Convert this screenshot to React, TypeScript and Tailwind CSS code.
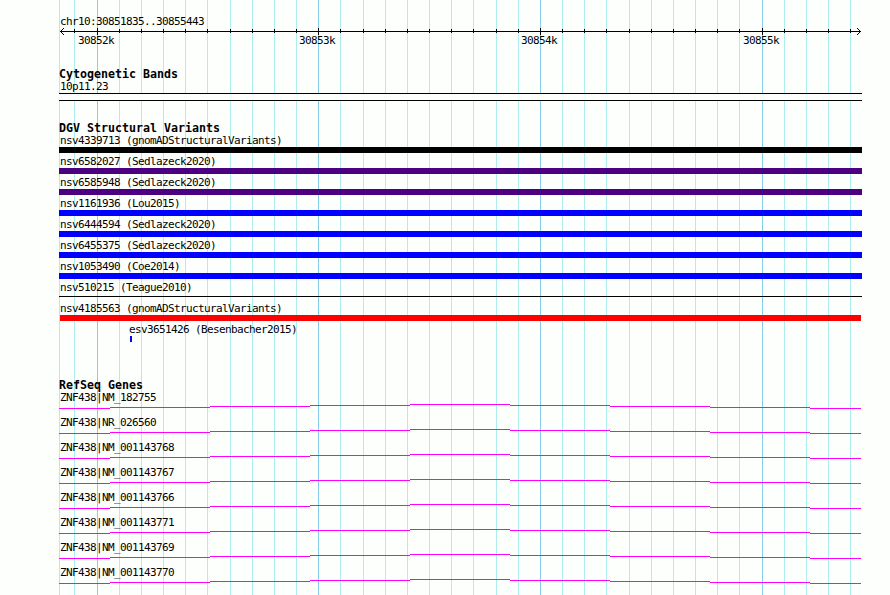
import React from "react";

const MINOR = [
  59, 74, 119, 141, 163, 185, 207, 230, 252, 274, 296, 340, 363, 385, 407, 429, 451, 473, 496, 518, 562, 584, 606,
  629, 651, 673, 695, 717, 739, 784, 806, 828, 850,
];

const MAJOR = [
  { x: 97, label: "30852k" },
  { x: 318, label: "30853k" },
  { x: 540, label: "30854k" },
  { x: 762, label: "30855k" },
];

const VARIANTS = [
  { name: "nsv4339713 (gnomADStructuralVariants)", bar: "h-1.5 bg-black" },
  { name: "nsv6582027 (Sedlazeck2020)", bar: "h-1.5 bg-[#4b0082]" },
  { name: "nsv6585948 (Sedlazeck2020)", bar: "h-1.5 bg-[#4b0082]" },
  { name: "nsv1161936 (Lou2015)", bar: "h-1.5 bg-[#0000ff]" },
  { name: "nsv6444594 (Sedlazeck2020)", bar: "h-1.5 bg-[#0000ff]" },
  { name: "nsv6455375 (Sedlazeck2020)", bar: "h-1.5 bg-[#0000ff]" },
  { name: "nsv1053490 (Coe2014)", bar: "h-1.5 bg-[#0000ff]" },
  { name: "nsv510215 (Teague2010)", bar: "mt-0.5 mb-[3px] h-px bg-black" },
  { name: "nsv4185563 (gnomADStructuralVariants)", bar: "ml-px mr-px h-1.5 bg-[#ff0000]" },
];

const GENES = [
  "ZNF438|NM_182755",
  "ZNF438|NR_026560",
  "ZNF438|NM_001143768",
  "ZNF438|NM_001143767",
  "ZNF438|NM_001143766",
  "ZNF438|NM_001143771",
  "ZNF438|NM_001143769",
  "ZNF438|NM_001143770",
];

const INTRON = "M0 4.5H51M51 3.5H151M151 2.5H251M251 1.5H351M351 .5H451M451 1.5H551M551 2.5H651M651 3.5H751M751 4.5H802";

function Grid() {
  return (
    <svg className="absolute inset-0" width="890" height="595" shapeRendering="crispEdges">
      {MINOR.map((x) => (
        <rect key={x} x={x} y="0" width="1" height="595" fill="#afeeee" />
      ))}
      {MAJOR.map(({ x }) => (
        <rect key={x} x={x} y="0" width="1" height="595" fill="#87ceeb" />
      ))}
    </svg>
  );
}

function Ruler() {
  return (
    <svg className="-ml-[59px] block" width="890" height="7" shapeRendering="crispEdges">
      <rect x="60" y="3" width="801" height="1" />
      {MINOR.slice(1).map((x) => (
        <rect key={x} x={x} y="1" width="1" height="4" />
      ))}
      {MAJOR.map(({ x }) => (
        <rect key={x} x={x} y="0" width="1" height="7" />
      ))}
      {[1, 2, 3].map((d) => (
        <React.Fragment key={d}>
          <rect x={60 + d} y={3 - d} width="1" height="1" />
          <rect x={60 + d} y={3 + d} width="1" height="1" />
          <rect x={860 - d} y={3 - d} width="1" height="1" />
          <rect x={860 - d} y={3 + d} width="1" height="1" />
        </React.Fragment>
      ))}
    </svg>
  );
}

function Label({ children }: { children: string }) {
  return <div className="h-[13px] pl-px">{children}</div>;
}

function Title({ children }: { children: string }) {
  return <h2 className="h-3 text-[11.63px] leading-[13px] font-bold tracking-normal">{children}</h2>;
}

export default function App() {
  return (
    <div className="relative h-[595px] w-[890px] overflow-hidden bg-[#fdfffc] font-['DejaVu_Sans_Mono','Liberation_Mono',monospace] text-[11px] leading-[13px] tracking-[-0.622px] whitespace-pre text-black">
      <Grid />
      <main className="relative ml-[59px] flex w-[803px] flex-col pt-[15px]">
        <Label>chr10:30851835..30855443</Label>
        <Ruler />
        <div className="-mt-px ml-[19px] grid h-[13px] grid-cols-[221px_222px_222px_36px]">
          {MAJOR.map(({ label }) => (
            <span key={label}>{label}</span>
          ))}
        </div>

        <section className="mt-[21px]">
          <Title>Cytogenetic Bands</Title>
          <Label>10p11.23</Label>
          <div className="h-2 border-y border-black bg-[#fdfffc]" />
        </section>

        <section className="mt-[21px]">
          <Title>DGV Structural Variants</Title>
          <div className="flex flex-col gap-0.5">
            {VARIANTS.map((v) => (
              <div key={v.name}>
                <Label>{v.name}</Label>
                <div className={v.bar} />
              </div>
            ))}
            <div className="ml-[69px]">
              <Label>esv3651426 (Besenbacher2015)</Label>
              <div className="ml-0.5 h-1.5 w-0.5 bg-[#0000ff]" />
            </div>
          </div>
        </section>

        <section className="mt-[37px]">
          <Title>RefSeq Genes</Title>
          {GENES.map((gene) => (
            <div key={gene} className="h-[25px]">
              <Label>{gene}</Label>
              <svg className="block" width="803" height="5" fill="none" stroke="#ff00ff" shapeRendering="crispEdges">
                <path d={INTRON} />
              </svg>
            </div>
          ))}
        </section>
      </main>
    </div>
  );
}
